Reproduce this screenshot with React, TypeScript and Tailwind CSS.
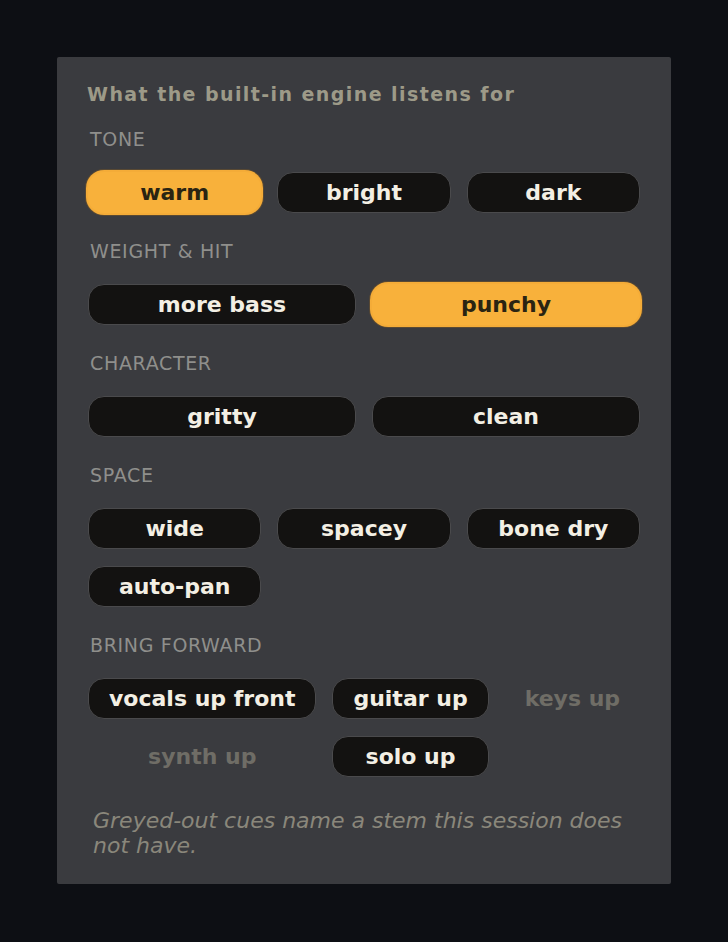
import React from 'react';

type Cue = { label: string; active?: boolean; missing?: boolean };

const sections: { title: string; cols: string; cues: Cue[] }[] = [
  { title: 'Tone', cols: 'grid-cols-3', cues: [{ label: 'warm', active: true }, { label: 'bright' }, { label: 'dark' }] },
  { title: 'Weight & Hit', cols: 'grid-cols-2', cues: [{ label: 'more bass' }, { label: 'punchy', active: true }] },
  { title: 'Character', cols: 'grid-cols-2', cues: [{ label: 'gritty' }, { label: 'clean' }] },
  {
    title: 'Space',
    cols: 'grid-cols-3',
    cues: [{ label: 'wide' }, { label: 'spacey' }, { label: 'bone dry' }, { label: 'auto-pan' }],
  },
  {
    title: 'Bring forward',
    cols: 'grid-cols-[auto_auto_auto]',
    cues: [
      { label: 'vocals up front' },
      { label: 'guitar up' },
      { label: 'keys up', missing: true },
      { label: 'synth up', missing: true },
      { label: 'solo up' },
    ],
  },
];

function CueButton({ cue }: { cue: Cue }) {
  const base = 'h-[41px] px-5 flex items-center justify-center rounded-[16px] text-[22px] font-bold whitespace-nowrap';
  if (cue.missing) {
    return <div className={`${base} text-[#6f6d66]`}>{cue.label}</div>;
  }
  if (cue.active) {
    return (
      <button className={`${base} bg-[#f8b13b] text-[#2a2412] ring-2 ring-[#f4ac38] shadow-[0_0_0_3px_rgba(150,100,30,0.35)]`}>
        {cue.label}
      </button>
    );
  }
  return (
    <button className={`${base} bg-[#131211] text-[#f3efe4] border border-[#4a4a4c]`}>
      {cue.label}
    </button>
  );
}

export default function App() {
  return (
    <div
      className="min-h-[942px] bg-[#0d0f14] pt-[57px]"
      style={{ fontFamily: '"DejaVu Sans", Verdana, sans-serif' }}
    >
      <div className="mx-auto w-[614px] h-[827px] bg-[#3a3b3f] rounded-[2px] px-[31px] pt-[25px]">
        <h2 className="text-[19px] leading-[24px] font-bold tracking-[0.075em] text-[#9d9a88] -ml-px">
          What the built-in engine listens for
        </h2>

        {sections.map((s, i) => (
          <div key={s.title} className={i === 0 ? 'mt-[22px]' : 'mt-[27px]'}>
            <div className="text-[19px] leading-[22px] uppercase tracking-[0.035em] text-[#8f8f8c] pl-[2px]">
              {s.title}
            </div>
            <div className={`mt-[22px] grid ${s.cols} gap-x-4 gap-y-[17px]`}>
              {s.cues.map((c) => (
                <CueButton key={c.label} cue={c} />
              ))}
            </div>
          </div>
        ))}

        <p className="mt-[31px] pl-[5px] text-[22px] leading-[25px] italic text-[#8a877b]">
          Greyed-out cues name a stem this session does not have.
        </p>
      </div>
    </div>
  );
}
